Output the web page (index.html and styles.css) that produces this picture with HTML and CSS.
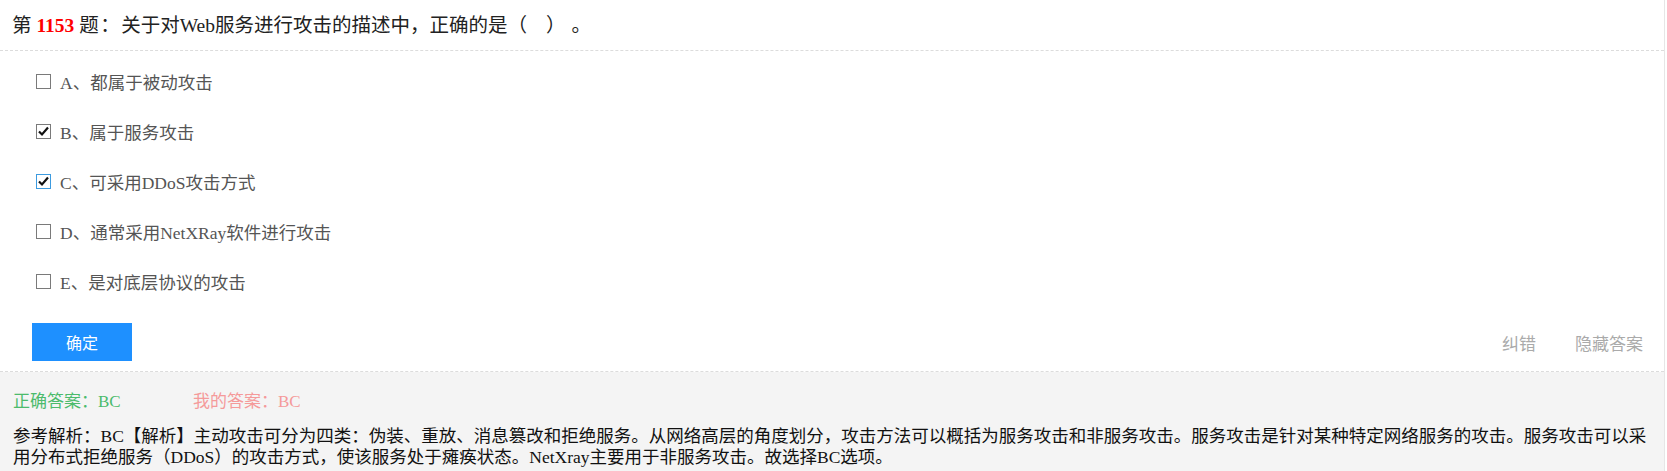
FILE: index.html
```html
<!DOCTYPE html>
<html lang="zh-CN">
<head>
<meta charset="utf-8">
<title>第1153题</title>
<link rel="stylesheet" href="styles.css">
</head>
<body>
<div class="question">
  <div class="title">第 <span class="num">1153</span> 题<span class="fw mid">：</span>关于对Web服务进行攻击的描述中<span class="fw">，</span>正确的是<span class="fw end">（</span><span class="blank"> </span><span class="fw close">）</span><span class="fw">。</span></div>
  <div class="options">
    <label class="option">
      <svg class="box" width="15" height="15" viewBox="0 0 15 15"><rect x="0.5" y="0.5" width="14" height="14" fill="#fff" stroke="#7a7a7a"/></svg>
      <span>A、都属于被动攻击</span>
    </label>
    <label class="option">
      <svg class="box" width="15" height="15" viewBox="0 0 15 15"><rect x="0.5" y="0.5" width="14" height="14" fill="#fff" stroke="#7a7a7a"/><path d="M3 7.5 L6 10.5 L12 3.5" fill="none" stroke="#111" stroke-width="2.2"/></svg>
      <span>B、属于服务攻击</span>
    </label>
    <label class="option">
      <svg class="box" width="15" height="15" viewBox="0 0 15 15"><rect x="0.5" y="0.5" width="14" height="14" fill="#fff" stroke="#3c9be0"/><path d="M3 7.5 L6 10.5 L12 3.5" fill="none" stroke="#111" stroke-width="2.2"/></svg>
      <span>C、可采用DDoS攻击方式</span>
    </label>
    <label class="option">
      <svg class="box" width="15" height="15" viewBox="0 0 15 15"><rect x="0.5" y="0.5" width="14" height="14" fill="#fff" stroke="#7a7a7a"/></svg>
      <span>D、通常采用NetXRay软件进行攻击</span>
    </label>
    <label class="option">
      <svg class="box" width="15" height="15" viewBox="0 0 15 15"><rect x="0.5" y="0.5" width="14" height="14" fill="#fff" stroke="#7a7a7a"/></svg>
      <span>E、是对底层协议的攻击</span>
    </label>
  </div>
  <div class="actions">
    <button class="confirm">确定</button>
    <div class="links">
      <a class="link">纠错</a>
      <a class="link">隐藏答案</a>
    </div>
  </div>
  <div class="answer">
    <div class="result">
      <span class="correct">正确答案：BC</span>
      <span class="mine">我的答案：BC</span>
    </div>
    <div class="analysis">参考解析：BC【解析】主动攻击可分为四类：伪装、重放、消息篡改和拒绝服务。从网络高层的角度划分，攻击方法可以概括为服务攻击和非服务攻击。服务攻击是针对某种特定网络服务的攻击。服务攻击可以采用分布式拒绝服务（DDoS）的攻击方式，使该服务处于瘫痪状态。NetXray主要用于非服务攻击。故选择BC选项。</div>
  </div>
</div>
</body>
</html>
```

FILE: styles.css
```css
html, body {
  margin: 0;
  padding: 0;
  background: #fff;
}
body {
  font-family: "Liberation Serif", "Noto Sans CJK SC", serif;
  color: #333;
}
.question {
  width: 1664px;
  border-right: 1px solid #e6e6e6;
  height: 471px;
  overflow: hidden;
}
.title {
  height: 50px;
  line-height: 48px;
  padding-left: 12px;
  font-size: 19.5px;
  color: #222;
  border-bottom: 1px dashed #dcdcdc;
}
.num {
  color: #f00;
  font-weight: bold;
}
.fw {
  display: inline-block;
  width: 1em;
  text-align: left;
  font-family: "Noto Sans CJK SC", sans-serif;
}
.fw.mid {
  width: 1.15em;
  text-align: center;
}
.fw.end {
  text-align: right;
}
.fw.close {
  width: calc(1em + 6px);
}
.blank {
  display: inline-block;
  width: 19px;
}
.options {
  padding: 5px 0 0 36px;
  display: flex;
  flex-direction: column;
}
.option {
  height: 50px;
  display: flex;
  align-items: center;
  font-size: 17.5px;
  color: #555;
}
.box {
  margin-right: 9px;
  flex: none;
}
.actions {
  display: flex;
  justify-content: space-between;
  align-items: center;
  padding: 17px 0 10px 32px;
  border-bottom: 1px dashed #dcdcdc;
}
.confirm {
  width: 100px;
  height: 38px;
  border: 0;
  background: #1e90ff;
  color: #fff;
  font-family: "Noto Sans CJK SC", sans-serif;
  font-size: 16px;
  padding: 0;
}
.links {
  display: flex;
  gap: 39px;
  padding-right: 21px;
}
.link {
  font-family: "Noto Sans CJK SC", sans-serif;
  font-size: 17px;
  color: #aaa;
}
.answer {
  background: #f4f4f4;
  padding: 20px 0 0 13px;
  height: 100px;
}
.result {
  display: flex;
  font-size: 17px;
  line-height: 20px;
}
.correct {
  color: #4cbb6c;
  width: 180px;
}
.mine {
  color: #f59a9a;
}
.analysis {
  margin-top: 14px;
  font-size: 17.5px;
  line-height: 21px;
  color: #111;
  padding-right: 10px;
}
```
